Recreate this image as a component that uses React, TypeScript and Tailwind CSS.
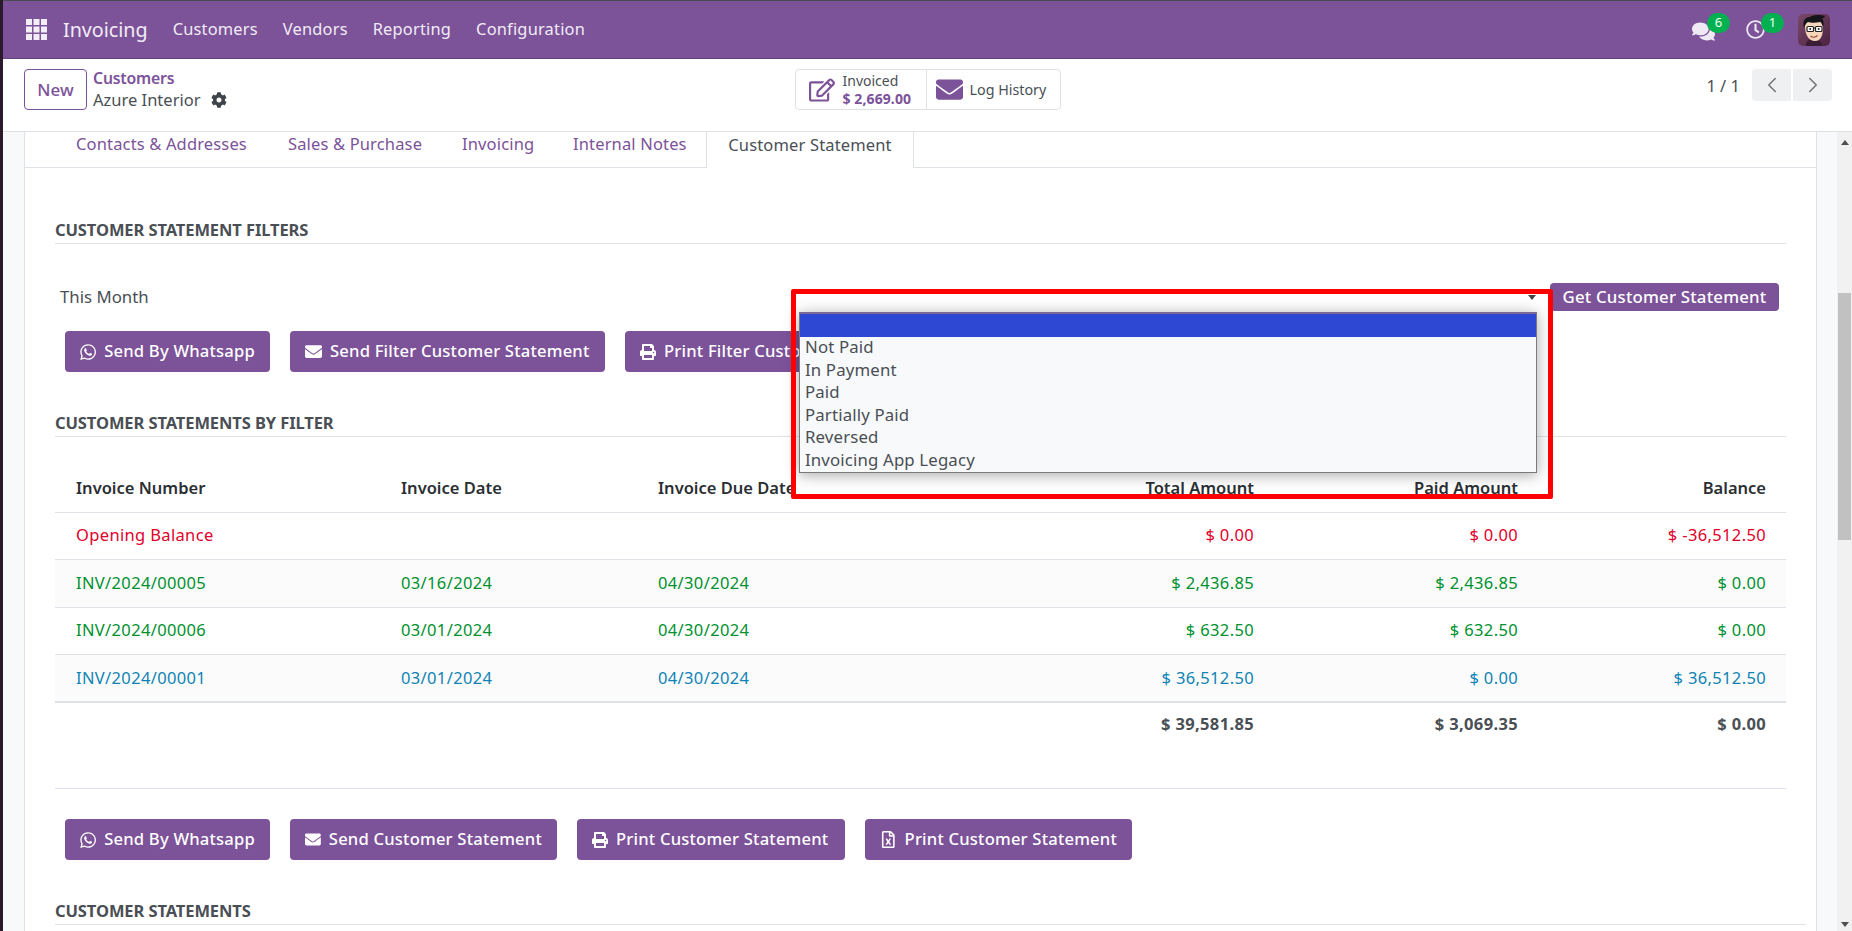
import React from "react";
import { ChevronLeft, ChevronRight } from "lucide-react";
import { FaComments, FaRegClock, FaCog, FaRegEdit, FaEnvelope, FaWhatsapp, FaPrint, FaRegFileExcel } from "react-icons/fa";

function GridIcon() {
  return (
    <svg width="21" height="21" viewBox="0 0 21 21" fill="#f3eef6">
      {[0, 7.5, 15].map((y) => [0, 7.5, 15].map((x) => <rect key={`${x}-${y}`} x={x} y={y} width="6" height="6" />))}
    </svg>
  );
}

function Avatar() {
  return (
    <svg width="32" height="32" viewBox="0 0 32 32" className="rounded-[5px]">
      <defs>
        <linearGradient id="av" x1="0" y1="0" x2="1" y2="1">
          <stop offset="0" stopColor="#7a4868" />
          <stop offset="1" stopColor="#4c2342" />
        </linearGradient>
      </defs>
      <rect width="32" height="32" fill="url(#av)" />
      <path d="M8 30c1-4 4-5 8-5s7 2 8 5v2H8z" fill="#3a1c34" />
      <path d="M7 12c0 9 4 15 10 15s8-6 8-14l-1-5H8z" fill="#f6d5bb" />
      <path d="M6 14C4 7 7 3 12 3c4-3 12-2 15-1-1 2-2 2-3 2 2 3 2 6 1 9-1-3-2-5-3-5-4 1-9 1-12 0-2 1-3 3-4 6z" fill="#15151a" />
      <rect x="9" y="12.5" width="6.5" height="5" rx="1" fill="#fff" stroke="#222" strokeWidth="1.2" />
      <rect x="17.5" y="12.5" width="6.5" height="5" rx="1" fill="#fff" stroke="#222" strokeWidth="1.2" />
      <path d="M15.5 14h2" stroke="#222" strokeWidth="1.2" />
      <circle cx="12.2" cy="15" r="1" fill="#222" />
      <circle cx="20.7" cy="15" r="1" fill="#222" />
      <path d="M12.5 22c2 1.6 5 1.6 7-.5" stroke="#8c4a3c" strokeWidth="1.2" fill="none" />
    </svg>
  );
}

function Badge({ n }: { n: string }) {
  return (
    <span className="absolute left-[15px] top-[-7px] flex h-[20px] w-[23px] items-center justify-center rounded-full bg-[#01b050] text-[13px] leading-none text-[#f4fff4]">
      {n}
    </span>
  );
}

function ActionButton({ icon, label, className = "" }: { icon: React.ReactNode; label: string; className?: string }) {
  return (
    <button className={`flex h-[41px] shrink-0 items-center gap-[8px] whitespace-nowrap rounded-[4px] bg-[#7c5299] px-[15px] text-[16.6px] font-medium tracking-[0.2px] text-white ${className}`}>
      {icon}
      <span>{label}</span>
    </button>
  );
}

function SectionTitle({ label, className = "" }: { label: string; className?: string }) {
  return (
    <div className={`flex h-[25px] items-center border-b border-[#dee2e6] pb-[2px] text-[16.5px] font-bold tracking-[-0.1px] text-[#4a4f55] ${className}`}>
      {label}
    </div>
  );
}

const rows = [
  { c: "text-[#e0002a]", a: "Opening Balance", b: "", d: "", t: "$ 0.00", p: "$ 0.00", bal: "$ -36,512.50", bg: "" },
  { c: "text-[#00912e]", a: "INV/2024/00005", b: "03/16/2024", d: "04/30/2024", t: "$ 2,436.85", p: "$ 2,436.85", bal: "$ 0.00", bg: "bg-[#fbfbfc]" },
  { c: "text-[#00912e]", a: "INV/2024/00006", b: "03/01/2024", d: "04/30/2024", t: "$ 632.50", p: "$ 632.50", bal: "$ 0.00", bg: "" },
  { c: "text-[#0f83b4]", a: "INV/2024/00001", b: "03/01/2024", d: "04/30/2024", t: "$ 36,512.50", p: "$ 0.00", bal: "$ 36,512.50", bg: "bg-[#fbfbfc]" },
];

const tabs = [
  { label: "Contacts & Addresses", cls: "ml-[51px] w-[172px]" },
  { label: "Sales & Purchase", cls: "ml-[40px] w-[133px]" },
  { label: "Invoicing", cls: "ml-[41px] w-[70px]" },
  { label: "Internal Notes", cls: "ml-[41px] w-[114px]" },
];

const options = ["Not Paid", "In Payment", "Paid", "Partially Paid", "Reversed", "Invoicing App Legacy"];

export default function App() {
  return (
    <div className="relative flex h-[931px] w-[1852px] overflow-hidden bg-[#2a1a2c] font-['Noto_Sans',sans-serif] text-[15px] text-[#4a4f55]">
      <div className="w-[3px] shrink-0" />
      <div className="flex min-w-0 flex-1 flex-col">
        <div className="h-px bg-[#4a4a50]" />
        {/* Navbar */}
        <header className="flex h-[58px] shrink-0 items-center border-b border-[#664380] bg-[#7c5299] text-white">
          <div className="ml-[23px]"><GridIcon /></div>
          <span className="ml-[16px] text-[19.7px] text-[#f1ecf5]">Invoicing</span>
          <nav className="ml-[25px] flex gap-[25px] text-[16.4px] tracking-[0.2px] text-[#f1ecf5]">
            <span>Customers</span>
            <span>Vendors</span>
            <span>Reporting</span>
            <span>Configuration</span>
          </nav>
          <div className="ml-auto flex items-center">
            <div className="relative mr-[31px] h-[20px] w-[23px] text-[#efe8f5]">
              <FaComments size={23} />
              <Badge n="6" />
            </div>
            <div className="relative mr-[33px] h-[20px] w-[19px] text-[#efe8f5]">
              <FaRegClock size={19} />
              <Badge n="1" />
            </div>
            <div className="mr-[22px] h-[32px]"><Avatar /></div>
          </div>
        </header>
        {/* Control panel */}
        <div className="flex h-[73px] shrink-0 items-start border-b border-[#dee2e6] bg-white">
          <button className="ml-[21px] mt-[10px] h-[41px] w-[63px] rounded-[4px] border border-[#7c5299] text-[17px] font-medium text-[#7c5299]">New</button>
          <div className="ml-[6px] mt-[9px] flex flex-col">
            <span className="text-[15.8px] font-semibold leading-[21px] tracking-[-0.2px] text-[#7c5299]">Customers</span>
            <span className="flex items-center text-[16.5px] leading-[22px]">
              Azure Interior
              <FaCog size={16} className="ml-[10px] text-[#3f444a]" />
            </span>
          </div>
          <div className="ml-[568px] mt-[10px] flex h-[41px] items-stretch rounded-[4px] border border-[#dee2e6]">
            <div className="flex w-[131px] items-center border-r border-[#dee2e6] pl-[13px]">
              <FaRegEdit size={26} className="text-[#7c5299]" />
              <div className="ml-[8px] flex flex-col text-[14px] leading-[18px]">
                <span>Invoiced</span>
                <span className="font-bold tracking-[0.1px] text-[#7c5299]">$ 2,669.00</span>
              </div>
            </div>
            <div className="flex w-[133px] items-center pl-[9px]">
              <FaEnvelope size={27} className="text-[#7c5299]" />
              <span className="ml-[7px] whitespace-nowrap text-[14.3px]">Log History</span>
            </div>
          </div>
          <span className="ml-auto mt-[15px] text-[16.5px]">1 / 1</span>
          <div className="ml-[12px] mr-[20px] mt-[10px] flex gap-[2px]">
            <span className="flex h-[32px] w-[39px] items-center justify-center rounded-l-[4px] bg-[#eef0f2]"><ChevronLeft size={26} strokeWidth={1.5} className="text-[#777]" /></span>
            <span className="flex h-[32px] w-[39px] items-center justify-center rounded-r-[4px] bg-[#eef0f2]"><ChevronRight size={26} strokeWidth={1.5} className="text-[#777]" /></span>
          </div>
        </div>
        {/* Body */}
        <div className="flex min-h-0 flex-1 bg-[#f8f9fa]">
          <div className="w-[21px] shrink-0" />
          <main className="w-[1793px] shrink-0 border-x border-[#dee2e6] bg-white">
            {/* Tabs */}
            <div className="flex h-[36px] items-stretch border-b border-[#dee2e6] text-[16.5px] tracking-[0.15px]">
              {tabs.map((t) => (
                <span key={t.label} className={`flex items-center whitespace-nowrap pb-[10px] text-[#7c5299] ${t.cls}`}>{t.label}</span>
              ))}
              <span className="mb-[-1px] ml-[19px] flex w-[208px] items-center justify-center whitespace-nowrap border-x border-[#dee2e6] bg-white pb-[10px]">Customer Statement</span>
            </div>
            <div className="pl-[30px] pr-[30px]">
              <SectionTitle label="CUSTOMER STATEMENT FILTERS" className="mt-[51px]" />
              {/* Filter row */}
              <div className="mt-[39px] flex h-[28px] items-center">
                <span className="ml-[5px] w-[732px] text-[16.8px]">This Month</span>
                <div className="flex h-[28px] w-[753px] items-center justify-end pr-[9px]">
                  <span className="h-0 w-0 border-x-[4px] border-t-[5px] border-x-transparent border-t-[#444]" />
                </div>
                <button className="ml-[5px] flex h-[28px] w-[229px] items-center justify-center whitespace-nowrap rounded-[4px] bg-[#7c5299] text-[16.8px] font-medium tracking-[0.2px] text-white">Get Customer Statement</button>
              </div>
              {/* Actions 1 */}
              <div className="ml-[10px] mt-[20px] flex gap-[20px]">
                <ActionButton icon={<FaWhatsapp size={18} />} label="Send By Whatsapp" className="w-[205px]" />
                <ActionButton icon={<FaEnvelope size={17} />} label="Send Filter Customer Statement" className="w-[315px]" />
                <ActionButton icon={<FaPrint size={16} />} label="Print Filter Customer Statement" className="w-[320px]" />
              </div>
              <SectionTitle label="CUSTOMER STATEMENTS BY FILTER" className="mt-[40px]" />
              {/* Table */}
              <table className="mt-[27px] w-full table-fixed border-collapse text-[16.5px] tracking-[0.35px]">
                <colgroup>
                  <col className="w-[325px]" />
                  <col className="w-[257px]" />
                  <col className="w-[300px]" />
                  <col className="w-[337px]" />
                  <col className="w-[264px]" />
                  <col />
                </colgroup>
                <thead>
                  <tr className="h-[48px] border-b border-[#dee2e6] text-[#2b2f33]">
                    <th className="pl-[21px] pt-[2px] text-left font-semibold tracking-normal">Invoice Number</th>
                    <th className="pl-[21px] pt-[2px] text-left font-semibold tracking-normal">Invoice Date</th>
                    <th className="pl-[21px] pt-[2px] text-left font-semibold tracking-normal">Invoice Due Date</th>
                    <th className="pr-[20px] pt-[2px] text-right font-semibold tracking-normal">Total Amount</th>
                    <th className="pr-[20px] pt-[2px] text-right font-semibold tracking-normal">Paid Amount</th>
                    <th className="pr-[20px] pt-[2px] text-right font-semibold tracking-normal">Balance</th>
                  </tr>
                </thead>
                <tbody>
                  {rows.map((r, i) => (
                    <tr key={r.a} className={`h-[47.5px] ${i === rows.length - 1 ? "border-b-2" : "border-b"} border-[#dee2e6] ${r.c} ${r.bg}`}>
                      <td className="pl-[21px]">{r.a}</td>
                      <td className="pl-[21px]">{r.b}</td>
                      <td className="pl-[21px]">{r.d}</td>
                      <td className="pr-[20px] text-right">{r.t}</td>
                      <td className="pr-[20px] text-right">{r.p}</td>
                      <td className="pr-[20px] text-right">{r.bal}</td>
                    </tr>
                  ))}
                  <tr className="h-[44px] font-bold text-[#4a4f55]">
                    <td colSpan={3} />
                    <td className="pr-[20px] text-right">$ 39,581.85</td>
                    <td className="pr-[20px] text-right">$ 3,069.35</td>
                    <td className="pr-[20px] text-right">$ 0.00</td>
                  </tr>
                </tbody>
              </table>
              <div className="mt-[42px] border-t border-[#e0dfed]" />
              {/* Actions 2 */}
              <div className="ml-[10px] mt-[30px] flex gap-[20px]">
                <ActionButton icon={<FaWhatsapp size={18} />} label="Send By Whatsapp" className="w-[205px]" />
                <ActionButton icon={<FaEnvelope size={17} />} label="Send Customer Statement" className="w-[267px]" />
                <ActionButton icon={<FaPrint size={16} />} label="Print Customer Statement" className="w-[268px]" />
                <ActionButton icon={<FaRegFileExcel size={17} />} label="Print Customer Statement" className="w-[267px]" />
              </div>
              <SectionTitle label="CUSTOMER STATEMENTS" className="-mr-[20px] mt-[40px]" />
            </div>
          </main>
          <div className="w-[20px] shrink-0" />
          {/* Scrollbar */}
          <div className="relative w-[15px] shrink-0 bg-[#f1f1f1]">
            <span className="absolute left-[4px] top-[8px] h-0 w-0 border-x-[4px] border-b-[5px] border-x-transparent border-b-[#505050]" />
            <div className="absolute left-[1px] top-[161px] h-[247px] w-[13px] bg-[#c1c1c1]" />
            <span className="absolute bottom-[4px] left-[4px] h-0 w-0 border-x-[4px] border-t-[5px] border-x-transparent border-t-[#505050]" />
          </div>
        </div>
      </div>
      {/* Open dropdown over the page */}
      <div className="absolute left-[799px] top-[312px] h-[161px] w-[738px] border border-t-2 border-[#7b7b7b] border-t-[#7c6a94] bg-[#f8f9fa] text-[16.8px] leading-[22.6px] tracking-[0.15px] text-[#4a4f55] shadow-[0_2px_14px_rgba(0,0,0,0.35)]">
        <div className="h-[23px] bg-[#2e48d4]" />
        <div className="-mt-px">
          {options.map((o) => (
            <div key={o} className="pl-[5px]">{o}</div>
          ))}
        </div>
      </div>
      {/* Red annotation */}
      <div className="pointer-events-none absolute left-[791px] top-[289px] h-[210px] w-[762px] rounded-[2px] border-[5px] border-[#fe0000]" />
    </div>
  );
}
